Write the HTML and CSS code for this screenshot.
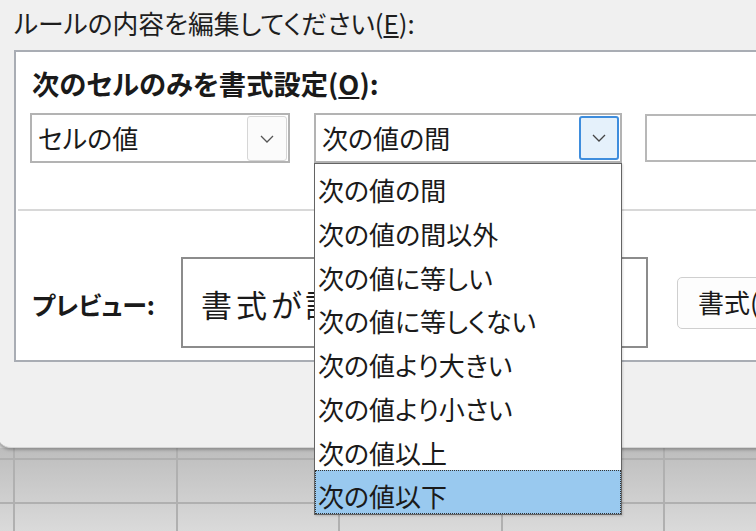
FILE: index.html
```html
<!DOCTYPE html>
<html lang="ja">
<head>
<meta charset="utf-8">
<link rel="stylesheet" href="styles.css">
</head>
<body>
<div class="screen">
  <div class="dialog">
    <div class="title">ルールの内容を編集してください(<u>E</u>):</div>
    <div class="group">
      <div class="heading">次のセルのみを書式設定(<u>O</u>):</div>
      <div class="row">
        <div class="combo combo1">
          <span class="combo-text">セルの値</span>
          <span class="drop-btn">
            <svg width="14" height="8" viewBox="0 0 14 8"><path d="M1 1 L7 7 L13 1" fill="none" stroke="#555" stroke-width="1.3"/></svg>
          </span>
        </div>
        <div class="combo combo2">
          <span class="combo-text">次の値の間</span>
          <span class="drop-btn active">
            <svg width="14" height="8" viewBox="0 0 14 8"><path d="M1 1 L7 7 L13 1" fill="none" stroke="#444" stroke-width="1.3"/></svg>
          </span>
        </div>
        <div class="textbox"></div>
      </div>
      <div class="sep"></div>
      <div class="preview-row">
        <div class="preview-label">プレビュー:</div>
        <div class="preview-box"><span class="preview-text">書式が設定されていません</span></div>
        <div class="format-btn">書式(<u>F</u>)...</div>
      </div>
    </div>
  </div>
  <div class="sheet">
    <div class="cell"></div><div class="cell"></div><div class="cell"></div><div class="cell"></div><div class="cell"></div><div class="cell"></div>
    <div class="cell"></div><div class="cell"></div><div class="cell"></div><div class="cell"></div><div class="cell"></div><div class="cell"></div>
    <div class="cell"></div><div class="cell"></div><div class="cell"></div><div class="cell"></div><div class="cell"></div><div class="cell"></div>
  </div>
  <ul class="list">
    <li class="item">次の値の間</li>
    <li class="item">次の値の間以外</li>
    <li class="item">次の値に等しい</li>
    <li class="item">次の値に等しくない</li>
    <li class="item">次の値より大きい</li>
    <li class="item">次の値より小さい</li>
    <li class="item">次の値以上</li>
    <li class="item selected">次の値以下</li>
  </ul>
</div>
</body>
</html>
```
FILE: styles.css
```css
* { box-sizing: border-box; }
html, body { margin: 0; padding: 0; }
body {
  width: 756px;
  height: 531px;
  overflow: hidden;
  font-family: "Noto Sans CJK JP", "Noto Sans", sans-serif;
  font-feature-settings: "palt";
  color: #1a1a1a;
  background: #d0d0d0;
}
.screen {
  position: relative;
  width: 756px;
  height: 531px;
  overflow: hidden;
}
.dialog {
  height: 448px;
  margin-left: -3px;
  width: 820px;
  padding: 8px 0 0 17px;
  background: #f0f0f0;
  border-bottom-left-radius: 14px;
  border-bottom: 1px solid #d4d4d4;
  box-shadow: 0 2px 3px rgba(0,0,0,0.25);
  position: relative;
  z-index: 1;
}
.title {
  font-size: 25.8px;
  line-height: 30px;
  height: 30px;
  color: #1e1e1e;
  white-space: nowrap;
}
.group {
  margin-top: 12px;
  height: 312px;
  width: 800px;
  background: #fff;
  border: 2px solid #a9adb4;
  padding: 16px 0 0 14px;
}
.heading {
  font-size: 27.3px;
  font-weight: bold;
  line-height: 30px;
  height: 30px;
  margin-left: 2px;
  white-space: nowrap;
}
.row {
  display: flex;
  margin-top: 15px;
  height: 50px;
  gap: 24px;
}
.combo {
  flex-shrink: 0;
  display: flex;
  align-items: stretch;
  justify-content: space-between;
  height: 50px;
  border: 2px solid #b3b3b3;
  background: #fff;
  padding: 1px 1px 0 6px;
}
.combo1 { width: 260px; }
.combo2 { width: 308px; }
.combo-text {
  font-size: 26px;
  line-height: 44px;
  white-space: nowrap;
}
.drop-btn {
  width: 40px;
  height: 45px;
  border: 1px solid #d6d6d6;
  border-radius: 3px;
  background: #fbfbfb;
  display: flex;
  align-items: center;
  justify-content: center;
}
.drop-btn.active {
  border: 2px solid #3e8ddd;
  background: #e5f1fb;
  height: 44px;
}
.textbox {
  flex-shrink: 0;
  margin-left: -1px;
  margin-top: 1px;
  width: 140px;
  height: 48px;
  border: 2px solid #b8b8b8;
  background: #fff;
}
.sep {
  margin: 46px 0 0 -12px;
  height: 2px;
  background: #d8d8d8;
}
.preview-row {
  display: flex;
  align-items: center;
  margin-top: 46px;
  height: 91px;
}
.preview-label {
  flex-shrink: 0;
  width: 151px;
  padding-left: 2px;
  font-size: 25px;
  font-weight: bold;
  line-height: 30px;
  margin-top: 2px;
  white-space: nowrap;
}
.preview-box {
  flex-shrink: 0;
  width: 467px;
  height: 91px;
  border: 2px solid #8c8c8c;
  background: #fff;
  display: flex;
  align-items: center;
  padding-left: 18px;
  overflow: hidden;
}
.preview-text {
  font-size: 31px;
  line-height: 40px;
  letter-spacing: 4px;
  white-space: nowrap;
  margin-top: 2px;
}
.format-btn {
  flex-shrink: 0;
  margin-left: 29px;
  width: 160px;
  height: 52px;
  border: 1px solid #cfcfcf;
  border-radius: 5px;
  background: #fdfdfd;
  padding-left: 20px;
  font-size: 26px;
  line-height: 48px;
  white-space: nowrap;
}
.sheet {
  display: grid;
  grid-template-columns: 13px repeat(5, 162.5px);
  grid-template-rows: 10px 44px 44px;
  background: linear-gradient(#bdbdbd 0%, #c6c6c6 30%, #dadada 100%);
  height: 83px;
}
.cell {
  border-left: 2px solid #b0b0b0;
  border-top: 2px solid #b0b0b0;
}
.cell:nth-child(6n+1) { border-left: none; }
.cell:nth-child(-n+6) { border-top: none; }
.list {
  position: absolute;
  left: 314px;
  top: 163px;
  width: 308px;
  height: 352px;
  margin: 0;
  padding: 0;
  list-style: none;
  background: #fff;
  border: 1px solid #646464;
  z-index: 5;
  box-shadow: 1px 1px 2px rgba(0,0,0,0.15);
}
.item {
  height: 43.75px;
  padding: 9px 0 0 3px;
  font-size: 26px;
  line-height: 34px;
  white-space: nowrap;
}
.item.selected {
  background: #99c9ef;
  outline: 1px dotted #333;
  outline-offset: -1px;
}
```
